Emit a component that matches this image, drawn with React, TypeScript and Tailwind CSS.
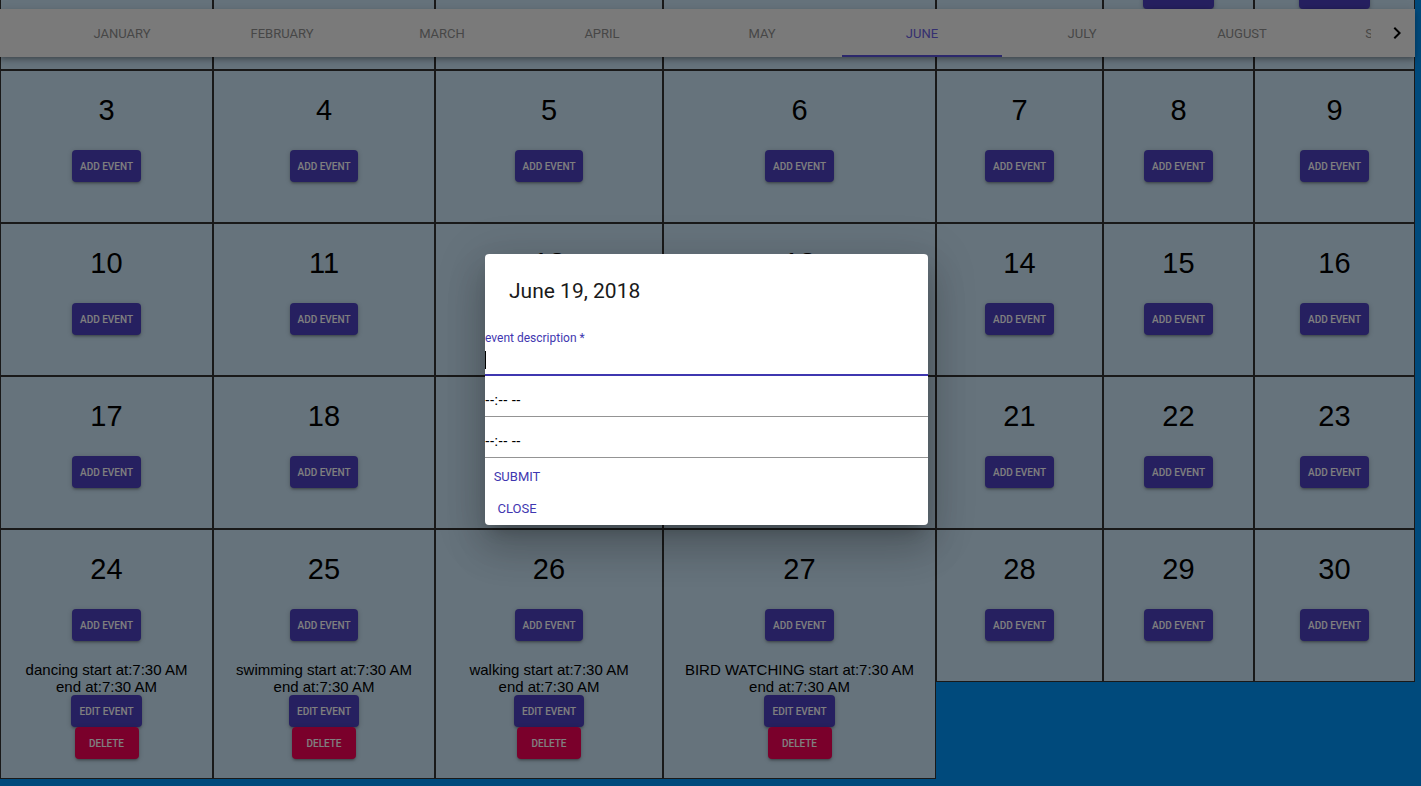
import React from "react";

const MONTHS = ["January", "February", "March", "April", "May", "June", "July", "August", "September"];

type Day = { day?: number; event?: string; roomy?: boolean };

const weeks: Day[][] = [
  [{}, {}, {}, {}, {}, { day: 1, event: "running", roomy: true }, { day: 2, event: "reading", roomy: true }],
  [3, 4, 5, 6, 7, 8, 9].map((d) => ({ day: d })),
  [10, 11, 12, 13, 14, 15, 16].map((d) => ({ day: d })),
  [17, 18, 19, 20, 21, 22, 23].map((d) => ({ day: d })),
  [
    { day: 24, event: "dancing" },
    { day: 25, event: "swimming" },
    { day: 26, event: "walking" },
    { day: 27, event: "BIRD WATCHING" },
    { day: 28 },
    { day: 29 },
    { day: 30 },
  ],
];

function Btn({ children, red, className = "" }: { children: React.ReactNode; red?: boolean; className?: string }) {
  return (
    <button
      className={`inline-flex h-8 min-w-[64px] items-center justify-center rounded px-2 font-['Roboto',sans-serif] text-[10px] font-medium uppercase text-white shadow-[0_1px_5px_rgba(0,0,0,0.2),0_2px_2px_rgba(0,0,0,0.14),0_3px_1px_-2px_rgba(0,0,0,0.12)] ${
        red ? "bg-[#f50057]" : "bg-[#4c40c0]"
      } ${className}`}
    >
      {children}
    </button>
  );
}

function Cell({ day, event, roomy }: Day) {
  if (!day) return <div className="self-stretch border border-[#333] bg-[#cce6f8]" />;
  return (
    <div
      className={`flex min-h-[153px] flex-col items-center border border-[#333] bg-[#cce6f8] pt-[23px] font-['Liberation_Sans',Arial,sans-serif] text-black ${
        roomy ? "pb-[28px]" : "pb-[19px]"
      }`}
    >
      <div className="text-[29px] leading-[33px]">{day}</div>
      <Btn className="mt-[23px]">Add event</Btn>
      {event && (
        <>
          <div className="mt-[20px] text-center text-[15px] leading-[17px]">
            {event} start at:7:30 AM
            <br />
            end at:7:30 AM
          </div>
          <Btn>Edit event</Btn>
          <Btn red>Delete</Btn>
        </>
      )}
    </div>
  );
}

export default function App() {
  return (
    <div className="relative h-screen w-full overflow-hidden bg-[#0094f8]">
      {/* calendar, scrolled down a bit */}
      <div className="-mt-[206px] w-[1415px]">
        {weeks.map((w, i) => (
          <div key={i} className="grid grid-cols-[213px_222px_228px_273px_167px_151px_161px] items-start">
            {w.map((d, j) => (
              <Cell key={j} {...d} />
            ))}
          </div>
        ))}
      </div>

      {/* month tabs */}
      <div className="absolute left-0 top-[9px] flex h-12 w-[1415px] bg-[#f5f5f5] font-['Roboto',sans-serif] shadow-[0_2px_4px_-1px_rgba(0,0,0,0.2),0_4px_5px_0_rgba(0,0,0,0.14),0_1px_10px_0_rgba(0,0,0,0.12)]">
        <div className="w-[42px] shrink-0" />
        <div className="flex flex-1 overflow-hidden">
          {MONTHS.map((m) => {
            const active = m === "June";
            return (
              <div
                key={m}
                className={`relative flex h-12 w-[160px] shrink-0 items-center justify-center pt-[2px] text-[13px] uppercase ${
                  active ? "text-[#6a60e0]" : "text-[#8e8e8e]"
                }`}
              >
                {m}
                {active && <span className="absolute bottom-0 left-0 h-[2px] w-full bg-[#5850d8]" />}
              </div>
            );
          })}
        </div>
        <div className="flex w-[44px] shrink-0 items-center justify-center">
          <svg width="24" height="24" viewBox="0 0 24 24" className="translate-x-[4px]">
            <path d="M8.59 16.59L13.17 12 8.59 7.41 10 6l6 6-6 6-1.41-1.41z" fill="#000" />
          </svg>
        </div>
      </div>

      {/* backdrop + dialog */}
      <div className="absolute inset-0 flex items-center justify-center bg-black/50 pb-[8px] pr-[8px]">
        <div className="w-[443px] rounded-sm bg-white font-['Roboto',sans-serif] shadow-[0_11px_15px_-7px_rgba(0,0,0,0.2),0_24px_38px_3px_rgba(0,0,0,0.14),0_9px_46px_8px_rgba(0,0,0,0.12)]">
          <div className="px-6 pb-[24px] pt-[21px] text-[21px] leading-[32px] text-[#1a1a1a]">June 19, 2018</div>
          <div className="text-[12px] leading-[14px] text-[#3f37b0]">event description *</div>
          <div className="mt-[2px] flex h-[29px] items-start border-b-2 border-[#3f37b0] pt-[4px]">
            <span className="h-[18px] w-px bg-black" />
          </div>
          <div className="flex h-[41px] items-end border-b border-[#949494] pb-[8px] font-['Liberation_Sans',Arial,sans-serif] text-[14px] leading-[16px] text-black">
            --:-- --
          </div>
          <div className="flex h-[41px] items-end border-b border-[#949494] pb-[8px] font-['Liberation_Sans',Arial,sans-serif] text-[14px] leading-[16px] text-black">
            --:-- --
          </div>
          <div className="flex flex-col items-start pt-[3px]">
            <button className="h-8 min-w-[64px] px-2 text-[13px] uppercase text-[#3f37b0]">Submit</button>
            <button className="h-8 min-w-[64px] px-2 text-[13px] uppercase text-[#3f37b0]">Close</button>
          </div>
        </div>
      </div>
    </div>
  );
}
